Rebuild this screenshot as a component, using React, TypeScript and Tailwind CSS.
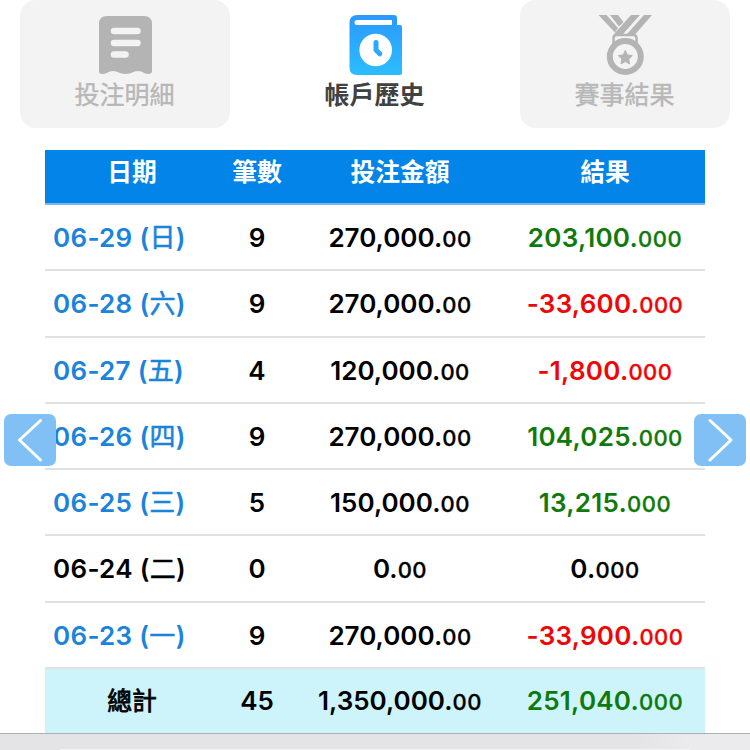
import { clsx } from 'clsx'

const rows = [
  { date: '06-29', day: '日', count: 9, amount: '270,000', result: '203,100' },
  { date: '06-28', day: '六', count: 9, amount: '270,000', result: '-33,600' },
  { date: '06-27', day: '五', count: 4, amount: '120,000', result: '-1,800' },
  { date: '06-26', day: '四', count: 9, amount: '270,000', result: '104,025' },
  { date: '06-25', day: '三', count: 5, amount: '150,000', result: '13,215' },
  { date: '06-24', day: '二', count: 0, amount: '0', result: '0' },
  { date: '06-23', day: '一', count: 9, amount: '270,000', result: '-33,900' },
]

const grid = 'grid grid-cols-[174px_76px_210px_200px] text-center'

function resultColor(value: string) {
  if (value === '0') return 'text-black'
  return value.startsWith('-') ? 'text-[#f00505]' : 'text-[#0f7a0b]'
}

function Money({ value, decimals }: { value: string; decimals: string }) {
  return (
    <span>
      {value}.<span className="text-[22px] font-medium tracking-[0.5px] [-webkit-text-stroke:0.3px]">{decimals}</span>
    </span>
  )
}

function ReceiptIcon() {
  return (
    <svg width="54" height="60" viewBox="0 0 54 60">
      <path
        d="M9 1h37q8 0 8 8v47q0 3-4 3c-4 0-5-3-10-3s-6 3-12.500 3-7.500-3-12.500-3-6 3-10 3-4-2-4-3V9q0-8 8-8z"
        fill="#b4b4b4"
      />
      <path d="M16 16h23.500M16 28h23.500M16 39.500h11.500" stroke="#f3f3f3" strokeWidth="6.500" strokeLinecap="round" />
    </svg>
  )
}

function HistoryIcon() {
  return (
    <svg width="54" height="60" viewBox="0 0 54 60">
      <defs>
        <linearGradient id="book" x1="0" y1="0" x2="0" y2="1">
          <stop offset="0" stopColor="#2b99ff" />
          <stop offset="1" stopColor="#2cbdff" />
        </linearGradient>
      </defs>
      <path
        d="M9.500 0H46q3 0 3 3v7h3q2 0 2 2v46q0 2-2 2H9q-7.500 0-7.500-7.500V8Q1.500 0 9.500 0z"
        fill="url(#book)"
      />
      <path d="M9 5h35v5H9q-2.500 0-2.500-2.500T9 5z" fill="#fff" />
      <circle cx="27.700" cy="35" r="16.300" fill="#fff" />
      <path d="M28 27.500v7.500l3.800 3.800" fill="none" stroke="#2ba8ff" strokeWidth="5" strokeLinecap="round" strokeLinejoin="round" />
    </svg>
  )
}

function MedalIcon() {
  return (
    <svg width="54" height="60" viewBox="0 0 54 60">
      <g fill="#b4b4b4">
        <path d="M.5 0h8L20 13l-3 4.500z" />
        <path d="M12 0h8l5.500 7-4.500 4.500z" />
        <path d="M33 0h9L25 19h-9z" />
        <path d="M46 0h8L37.500 19h-8.500z" />
      </g>
      <path d="M15.500 29v-6q0-3 3-3h17q3 0 3 3v6" fill="none" stroke="#b4b4b4" strokeWidth="2.500" />
      <circle cx="27.300" cy="41.500" r="15.500" fill="none" stroke="#b4b4b4" strokeWidth="6" />
      <path
        d="M27.300 35.500l2.100 4.400 4.900.7-3.600 3.400.9 4.900-4.300-2.400-4.300 2.400.9-4.900-3.600-3.400 4.900-.7z"
        fill="#b4b4b4"
        stroke="#b4b4b4"
        strokeLinejoin="round"
      />
    </svg>
  )
}

const tabs = [
  { name: '投注明細', Icon: ReceiptIcon, active: false },
  { name: '帳戶歷史', Icon: HistoryIcon, active: true },
  { name: '賽事結果', Icon: MedalIcon, active: false },
]

function Arrow({ className, d }: { className: string; d: string }) {
  return (
    <button className={clsx('absolute top-[414px] size-[52px] rounded-[7px] bg-[#81c0f4]', className)}>
      <svg width="52" height="52" viewBox="0 0 52 52" fill="none" stroke="#fff" strokeWidth="3" strokeLinecap="round" strokeLinejoin="round">
        <path d={d} />
      </svg>
    </button>
  )
}

export default function App() {
  return (
    <div className="relative flex h-[750px] w-[750px] flex-col overflow-hidden bg-white font-[Inter,'Noto_Sans_CJK_TC',sans-serif]">
      <nav className="flex h-[150px] shrink-0 items-start justify-between px-5">
        {tabs.map(({ name, Icon, active }) => (
          <div
            key={name}
            className={clsx(
              'flex h-32 w-[210px] flex-col items-center rounded-2xl pt-[15px] text-[25px] leading-[40px]',
              active ? 'font-bold text-[#414141]' : 'bg-[#f3f3f3] text-[#b7b7b7] [-webkit-text-stroke:0.4px]',
            )}
          >
            <Icon />
            <span className="-ml-px">{name}</span>
          </div>
        ))}
      </nav>

      <main className="mx-[45px] h-[583px] shrink-0">
        <div className={clsx(grid, 'h-[55px] border-b-2 border-[#80b5e4] bg-[#0284e8] text-[24.800px] leading-[44px] font-bold text-white')}>
          <span>日期</span>
          <span>筆數</span>
          <span>投注金額</span>
          <span>結果</span>
        </div>
        {rows.map((row) => (
          <div
            key={row.date}
            className={clsx(grid, 'h-[66.300px] border-b-2 border-[#e1e1e3] text-[26px] leading-[65px] font-semibold text-black')}
          >
            <span className={clsx('pl-2 text-left tracking-[0.300px] whitespace-nowrap', row.count > 0 && 'text-[#1a83dc]')}>
              {row.date} (<span className="font-normal [-webkit-text-stroke:0.500px]">{row.day}</span>)
            </span>
            <span>{row.count}</span>
            <Money value={row.amount} decimals="00" />
            <span className={clsx('tracking-[0.250px]', resultColor(row.result))}>
              <Money value={row.result} decimals="000" />
            </span>
          </div>
        ))}
        <div className={clsx(grid, 'h-[66px] bg-[#cdf3fb] text-[26px] leading-[64px] font-semibold text-black')}>
          <span className="text-[24.800px] font-normal [-webkit-text-stroke:0.8px]">總計</span>
          <span>45</span>
          <Money value="1,350,000" decimals="00" />
          <span className="tracking-[0.250px] text-[#0f7a0b]">
            <Money value="251,040" decimals="000" />
          </span>
        </div>
      </main>

      <footer className="z-10 h-[17px] shrink-0 border-t border-[#b0b0b3] bg-linear-to-r from-[#e4e4e6] from-85% to-[#ebebed] to-92% pt-[15px]">
        <div className="mr-[60px] ml-[60px] h-px rounded-t-full bg-[#f3f3f5]" />
      </footer>

      <Arrow className="left-1" d="M36.500 6.500L15.500 26l21 20" />
      <Arrow className="right-1" d="M16 6.500L37 26 16 46" />
    </div>
  )
}
